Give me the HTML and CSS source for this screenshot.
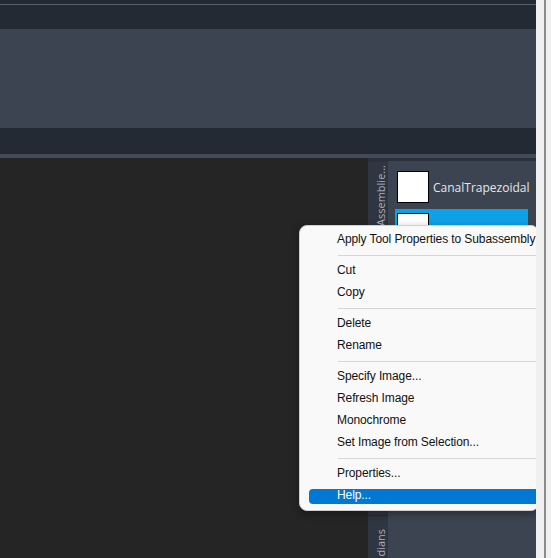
FILE: index.html
```html
<!DOCTYPE html>
<html>
<head>
<meta charset="utf-8">
<link rel="stylesheet" href="styles.css">
</head>
<body>
<div class="main">
  <div class="band b-top"></div>
  <div class="band b-line"></div>
  <div class="band b-dark1"></div>
  <div class="band b-ribbon"></div>
  <div class="band b-dark2"></div>
  <div class="band b-sep"></div>
  <div class="work">
    <div class="canvas"></div>
    <div class="side">
      <div class="tabs">
        <div class="tab tab-first"><span class="vtext">Assemblie...</span></div>
        <div class="tab tab-fill"></div>
        <div class="tab tab-last"><span class="vtext">dians</span></div>
      </div>
      <div class="palette">
        <div class="tool">
          <div class="thumb"></div>
          <span class="tool-name">CanalTrapezoidal</span>
        </div>
        <div class="tool selected">
          <div class="thumb"></div>
          <span class="tool-name"></span>
        </div>
      </div>
    </div>
  </div>
</div>
<div class="strip"><div class="strip-line"></div></div>

<div class="menu">
  <div class="item">Apply Tool Properties to Subassembly</div>
  <div class="sep"></div>
  <div class="item">Cut</div>
  <div class="item">Copy</div>
  <div class="sep"></div>
  <div class="item">Delete</div>
  <div class="item">Rename</div>
  <div class="sep"></div>
  <div class="item">Specify Image...</div>
  <div class="item">Refresh Image</div>
  <div class="item">Monochrome</div>
  <div class="item">Set Image from Selection...</div>
  <div class="sep"></div>
  <div class="item">Properties...</div>
  <div class="item active">Help...</div>
</div>
</body>
</html>
```

FILE: styles.css
```css
html, body {
  margin: 0;
  padding: 0;
}
body {
  width: 551px;
  height: 558px;
  overflow: hidden;
  display: flex;
  position: relative;
  background: #252525;
  font-family: "Liberation Sans", Arial, sans-serif;
}
.main {
  flex: 1;
  display: flex;
  flex-direction: column;
  min-width: 0;
}
.band { flex: none; }
.b-top { height: 4px; background: #232a34; }
.b-line { height: 1px; background: #56606e; }
.b-dark1 { height: 24px; background: #232a34; }
.b-ribbon { height: 99px; background: #3c4452; }
.b-dark2 { height: 26px; background: #232a34; }
.b-sep { height: 4px; background: #434b59; }

.work {
  flex: 1;
  display: flex;
  min-height: 0;
}
.canvas {
  flex: 1;
  background: #252525;
}
.side {
  width: 168px;
  flex: none;
  display: flex;
  background: #2b313b;
  padding-top: 3px;
}
.tabs {
  width: 20px;
  flex: none;
  display: flex;
  flex-direction: column;
  background: #2f3541;
  margin-top: 1px;
}
.tab {
  display: flex;
  flex-direction: column;
  align-items: flex-start;
  padding-left: 6px;
  border-bottom: 1px solid #252a33;
}
.tab-first {
  height: 70px;
  padding-top: 3px;
  overflow: hidden;
}
.tab-fill { flex: 1; }
.tab-last {
  height: 42px;
  padding-top: 13px;
  border-bottom: none;
  box-sizing: border-box;
  overflow: hidden;
}
.vtext {
  writing-mode: vertical-rl;
  transform: rotate(180deg);
  font-family: "Open Sans", "Liberation Sans", sans-serif;
  font-size: 11px;
  color: #a9b0bc;
  white-space: nowrap;
  line-height: 13px;
}
.palette {
  flex: 1;
  min-width: 0;
  background: #3c4452;
  padding: 6px 8px 0 7px;
  display: flex;
  flex-direction: column;
  gap: 2px;
}
.tool {
  display: flex;
  align-items: center;
  gap: 4px;
  padding: 4px 2px;
  height: 32px;
}
.tool.selected {
  background: #0ea1e8;
  height: 36px;
  align-items: flex-start;
}
.thumb {
  width: 30px;
  height: 30px;
  background: #ffffff;
  border: 1px solid #000;
  flex: none;
}
.tool-name {
  font-family: "Open Sans", "Liberation Sans", sans-serif;
  font-size: 12px;
  color: #e4e6ea;
  white-space: nowrap;
}

.strip {
  width: 15px;
  flex: none;
  background: #f0f0f0;
  position: relative;
  z-index: 2;
}
.strip-line {
  position: absolute;
  left: 8px;
  top: 0;
  bottom: 0;
  width: 2px;
  background: #8a8a8a;
}

.menu {
  position: absolute;
  left: 299px;
  top: 225px;
  width: 240px;
  padding: 3px 0;
  background: #f9f9f9;
  border: 1px solid #d0d0d0;
  border-radius: 8px;
  box-shadow: 0 3px 8px rgba(0, 0, 0, 0.35);
  z-index: 1;
  box-sizing: border-box;
}
.item {
  position: relative;
  z-index: 0;
  height: 22px;
  line-height: 21px;
  padding-left: 37px;
  font-size: 12px;
  letter-spacing: -0.1px;
  color: #111;
  white-space: nowrap;
}
.sep {
  height: 9px;
  margin-left: 38px;
  position: relative;
}
.sep::after {
  content: "";
  position: absolute;
  left: 0;
  right: 0;
  top: 4px;
  height: 1px;
  background: #d6d6d6;
}
.item.active {
  color: #ffffff;
}
.item.active::before {
  content: "";
  position: absolute;
  left: 9px;
  right: 0;
  top: 4px;
  bottom: 3px;
  background: #0078d4;
  border-radius: 4px 0 0 4px;
  z-index: -1;
}
```
